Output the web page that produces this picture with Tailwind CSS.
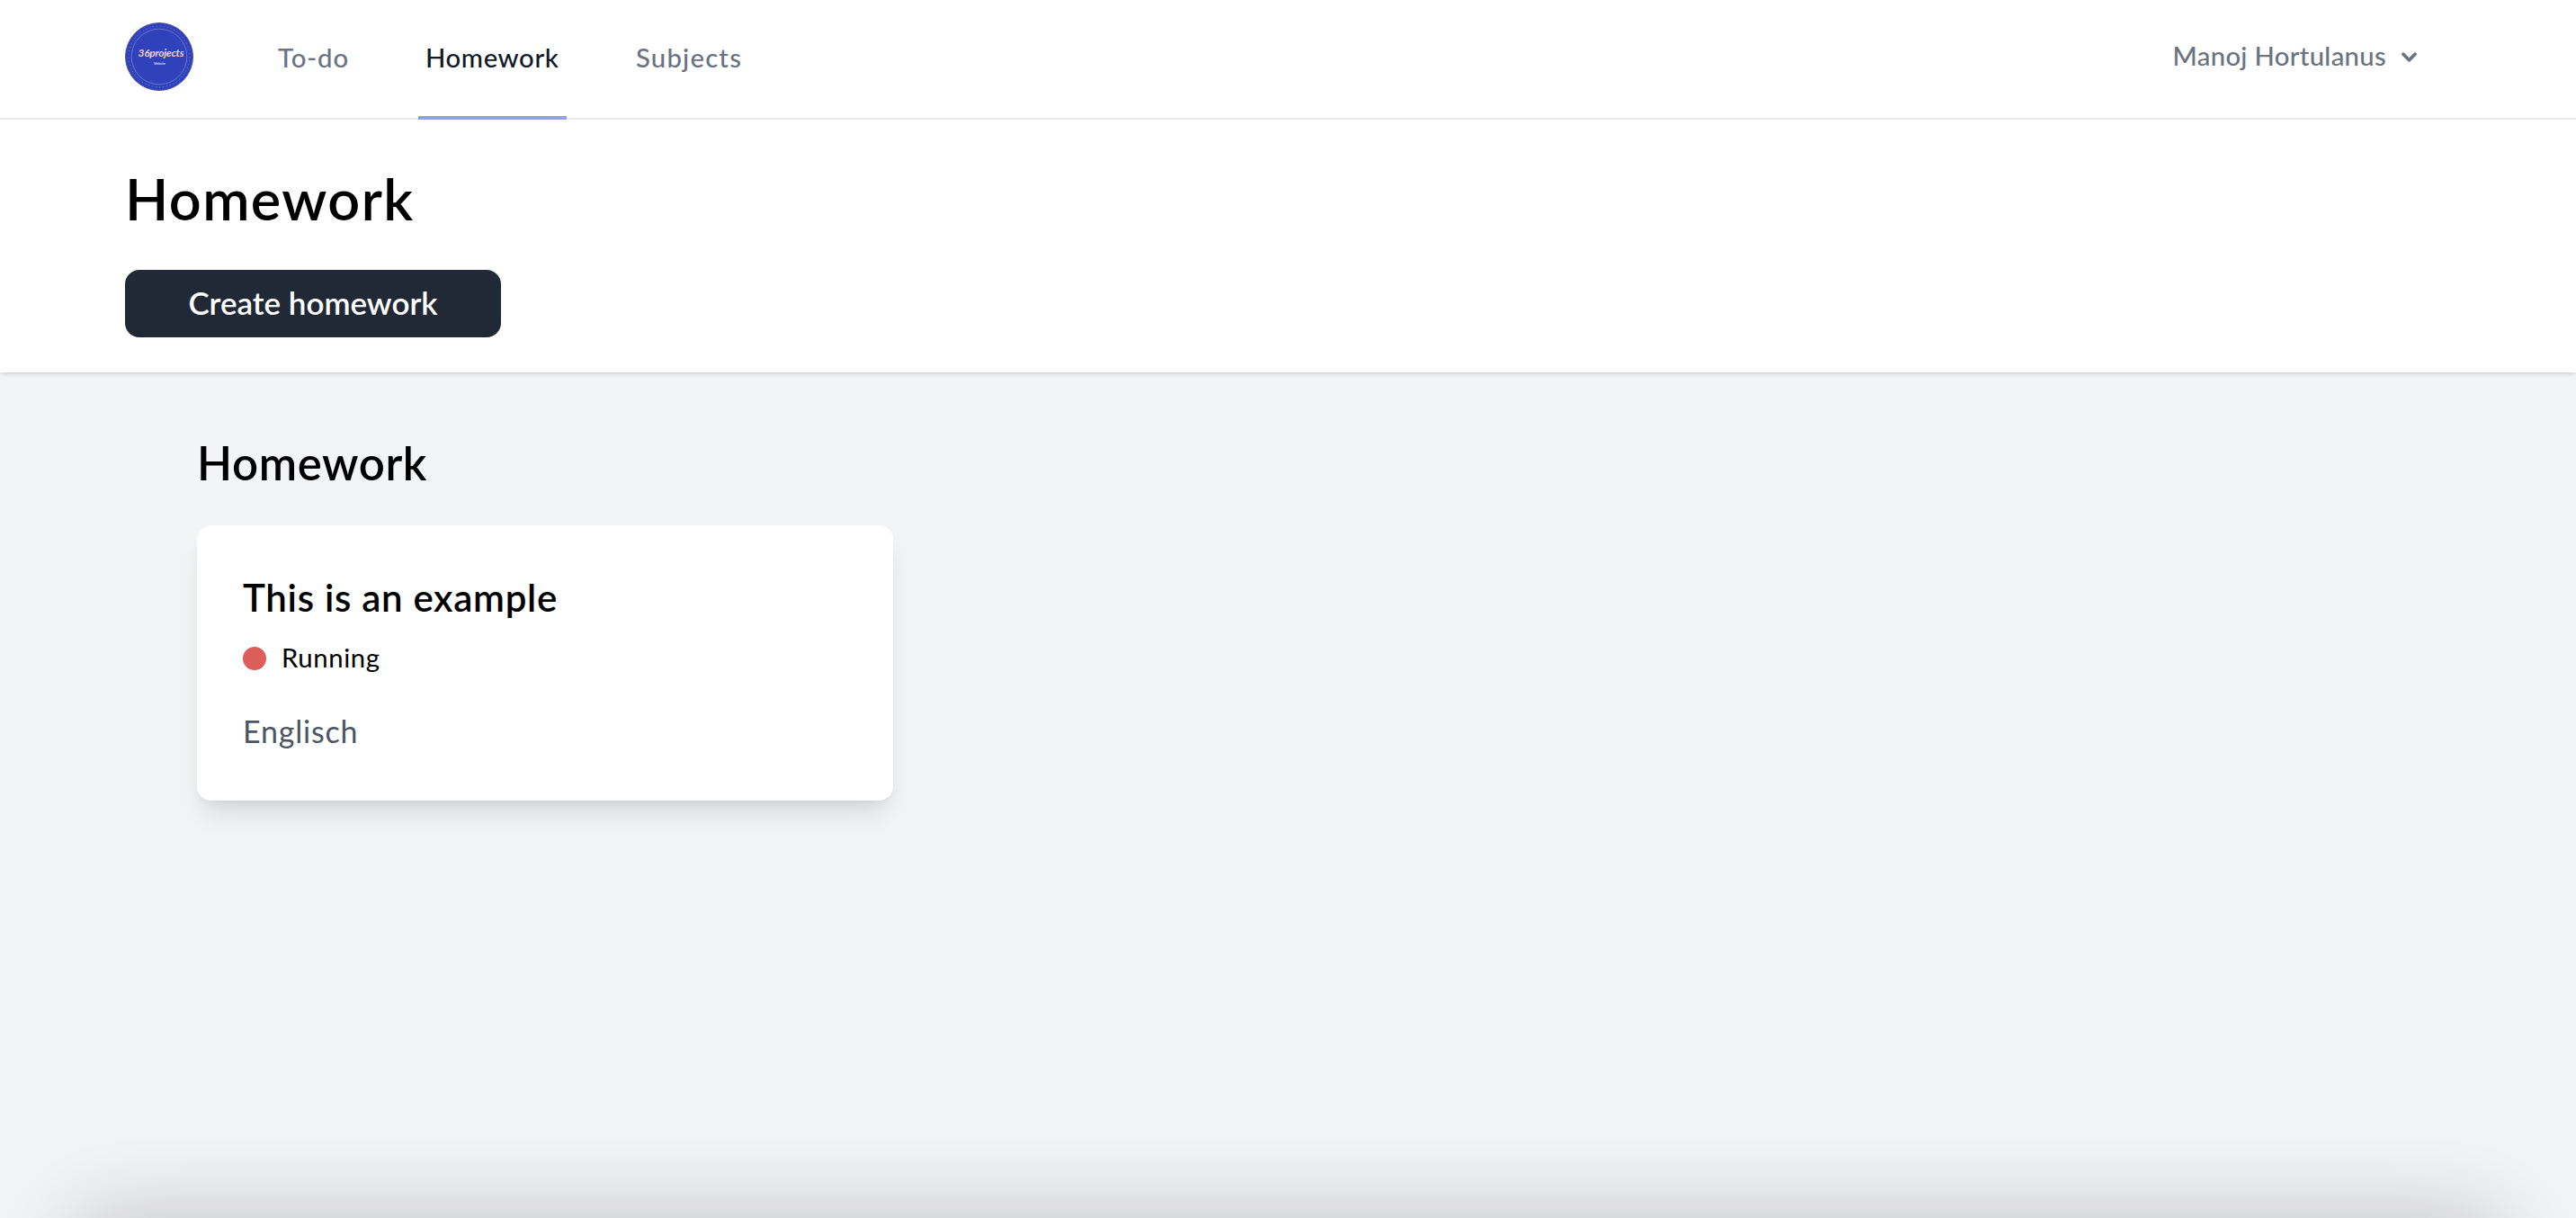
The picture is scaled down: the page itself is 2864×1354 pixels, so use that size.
<!DOCTYPE html>
<html lang="en">
<head>
    <meta charset="UTF-8">
    <meta name="viewport" content="width=device-width, initial-scale=1.0">
    <title>Homework</title>
    <script src="https://cdn.jsdelivr.net/npm/@tailwindcss/browser@4"></script>
    <style>
        body {
            font-family: 'Lato', sans-serif;
        }
    </style>
</head>
<body class="relative h-screen overflow-hidden bg-[#f3f4f6] text-black">

    <!-- Navigation -->
    <nav class="flex h-[133px] items-start justify-between bg-white pl-[139px] pr-[169px] shadow-[inset_0_-2px_0_#efeff0]">
        <div class="flex items-start">
            <svg class="mt-[25px] h-[76px] w-[76px]" viewBox="0 0 76 76">
                <circle cx="38" cy="38" r="37.5" fill="#2f42bb" stroke="#54509a" stroke-width="1"/>
                <circle cx="38" cy="38" r="33.8" fill="none" stroke="#7f8bd8" stroke-width="1" stroke-dasharray="1 3"/>
                <circle cx="38" cy="38" r="30.8" fill="none" stroke="#7681cd" stroke-width=".8"/>
                <text x="14.5" y="38" textLength="51" lengthAdjust="spacing" font-family="Lato" font-size="12" font-weight="700" font-style="italic" fill="#f0cfd8">36projects</text>
                <text x="32" y="46.5" textLength="13" lengthAdjust="spacingAndGlyphs" font-family="Lato" font-size="3.5" font-weight="700" fill="#d9dcf5">Website</text>
            </svg>
            <div class="ml-[86px] flex gap-[69px] text-[29.3px] font-medium text-[#6b7280]">
                <a href="#" class="flex h-[133px] w-[95px] items-center border-b-4 border-transparent px-2 pb-px tracking-[0.9px] whitespace-nowrap">To-do</a>
                <a href="#" class="flex h-[133px] w-[165px] items-center border-b-4 border-[#949fe6] px-2 pb-px tracking-[0.6px] whitespace-nowrap text-[#111827]">Homework</a>
                <a href="#" class="flex h-[133px] w-[133px] items-center border-b-4 border-transparent px-2 pb-px tracking-[1.2px] whitespace-nowrap">Subjects</a>
            </div>
        </div>
        <button class="flex h-[131px] items-center pb-2 text-[29.3px] font-medium tracking-[0.3px] text-[#6b7280]">
            <span>Manoj Hortulanus</span>
            <svg class="mt-[3px] ml-[9px] h-[33px] w-[33px]" viewBox="0 0 20 20" fill="currentColor" stroke="currentColor" stroke-width=".3">
                <path fill-rule="evenodd" d="M5.293 7.293a1 1 0 011.414 0L10 10.586l3.293-3.293a1 1 0 111.414 1.414l-4 4a1 1 0 01-1.414 0l-4-4a1 1 0 010-1.414z" clip-rule="evenodd"/>
            </svg>
        </button>
    </nav>

    <!-- Page heading -->
    <header class="h-[281px] bg-white pt-[52px] pl-[139px] shadow-[0_2px_6px_rgb(0_0_0/0.1),0_2px_4px_-2px_rgb(0_0_0/0.1)]">
        <h1 class="text-[63px] leading-[72px] font-semibold tracking-[1.4px]">Homework</h1>
        <button class="mt-[43px] flex h-[75px] w-[418px] items-center justify-center rounded-[16px] bg-[#212836] pb-[3px] text-[35px] font-semibold text-white">Create homework</button>
    </header>

    <!-- Homework list -->
    <main class="pt-[71px] pl-[219px]">
        <h2 class="text-[51px] leading-[60px] font-semibold tracking-[0.6px]">Homework</h2>
        <div class="mt-[39px] h-[306px] w-[774px] rounded-[16px] bg-white px-[51px] pt-[55px] shadow-[0_21px_31px_-6px_rgb(0_0_0/0.1),0_8px_13px_-8px_rgb(0_0_0/0.1)]">
            <h3 class="text-[42px] leading-[50px] font-semibold tracking-[0.7px]">This is an example</h3>
            <div class="mt-[24px] flex items-center">
                <span class="mt-[2px] h-[26px] w-[26px] rounded-full bg-[#dd5d5a]"></span>
                <span class="ml-[17px] text-[29.3px] leading-[36px] tracking-[0.6px]">Running</span>
            </div>
            <p class="mt-[43px] text-[34px] leading-[42px] tracking-[0.8px] text-[#4b5563]">Englisch</p>
        </div>
    </main>

    <!-- Soft shadow along the bottom edge -->
    <div class="absolute right-[185px] bottom-0 left-[185px] h-0 shadow-[0_104px_104px_100px_rgb(0_0_0/0.23)]"></div>

</body>
</html>
